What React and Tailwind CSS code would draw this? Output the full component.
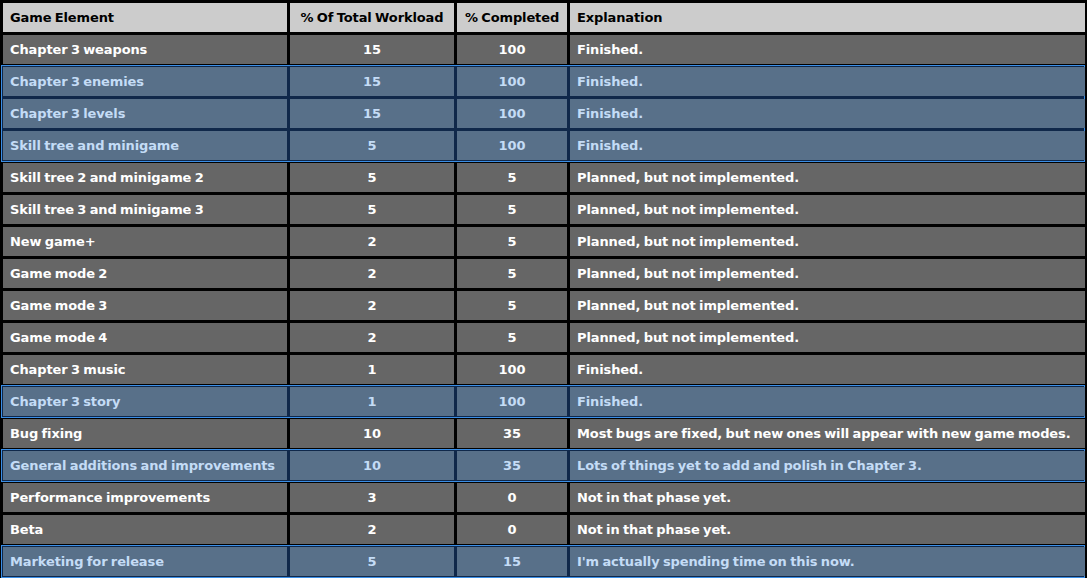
const rows = [
  ['Chapter 3 weapons', '15', '100', 'Finished.', false],
  ['Chapter 3 enemies', '15', '100', 'Finished.', true],
  ['Chapter 3 levels', '15', '100', 'Finished.', true],
  ['Skill tree and minigame', '5', '100', 'Finished.', true],
  ['Skill tree 2 and minigame 2', '5', '5', 'Planned, but not implemented.', false],
  ['Skill tree 3 and minigame 3', '5', '5', 'Planned, but not implemented.', false],
  ['New game+', '2', '5', 'Planned, but not implemented.', false],
  ['Game mode 2', '2', '5', 'Planned, but not implemented.', false],
  ['Game mode 3', '2', '5', 'Planned, but not implemented.', false],
  ['Game mode 4', '2', '5', 'Planned, but not implemented.', false],
  ['Chapter 3 music', '1', '100', 'Finished.', false],
  ['Chapter 3 story', '1', '100', 'Finished.', true],
  ['Bug fixing', '10', '35', 'Most bugs are fixed, but new ones will appear with new game modes.', false],
  ['General additions and improvements', '10', '35', 'Lots of things yet to add and polish in Chapter 3.', true],
  ['Performance improvements', '3', '0', 'Not in that phase yet.', false],
  ['Beta', '2', '0', 'Not in that phase yet.', false],
  ['Marketing for release', '5', '15', "I'm actually spending time on this now.", true],
]

// group consecutive highlighted rows together so they share one outline
const groups = []
rows.forEach((r) => {
  const last = groups[groups.length - 1]
  if (last && last.hi && r[4]) last.items.push(r)
  else groups.push({ hi: r[4], items: [r] })
})

const Row = ({ cells, hi }) => {
  const cell = hi ? 'bg-[#587089] text-[#c4dcf6]' : 'bg-[#666666] text-white'
  return (
    <div className="grid grid-cols-[284px_164px_110px_515px] gap-[3px] h-[29px]">
      <div className={`${cell} flex items-center pl-[7px]`}>{cells[0]}</div>
      <div className={`${cell} flex items-center justify-center`}>{cells[1]}</div>
      <div className={`${cell} flex items-center justify-center`}>{cells[2]}</div>
      <div className={`${cell} flex items-center pl-[7px] whitespace-nowrap`}>{cells[3]}</div>
    </div>
  )
}

export default function App() {
  return (
    <div
      className="w-[1087px] h-[578px] bg-black pl-[3px] pt-[3px] overflow-hidden text-[13px] font-bold leading-none tracking-[-0.12px] [word-spacing:-1px]"
      style={{ fontFamily: '"DejaVu Sans", Verdana, sans-serif' }}
    >
      <div className="flex flex-col gap-[3px]">
        {/* Header */}
        <div className="grid grid-cols-[284px_164px_110px_515px] gap-[3px] h-[29px] text-black">
          <div className="bg-[#cccccc] flex items-center pl-[7px]">Game Element</div>
          <div className="bg-[#cccccc] flex items-center justify-center">% Of Total Workload</div>
          <div className="bg-[#cccccc] flex items-center justify-center">% Completed</div>
          <div className="bg-[#cccccc] flex items-center pl-[7px]">Explanation</div>
        </div>

        {groups.map((g, i) =>
          g.hi ? (
            <div
              key={i}
              className="-mx-[2px] -my-[2px] border border-[#3a8ee6] bg-[#10284a] p-px flex flex-col gap-[3px] w-[1084px]"
            >
              {g.items.map((r) => (
                <Row key={r[0]} cells={r} hi />
              ))}
            </div>
          ) : (
            g.items.map((r) => <Row key={r[0]} cells={r} hi={false} />)
          )
        )}
      </div>
    </div>
  )
}
